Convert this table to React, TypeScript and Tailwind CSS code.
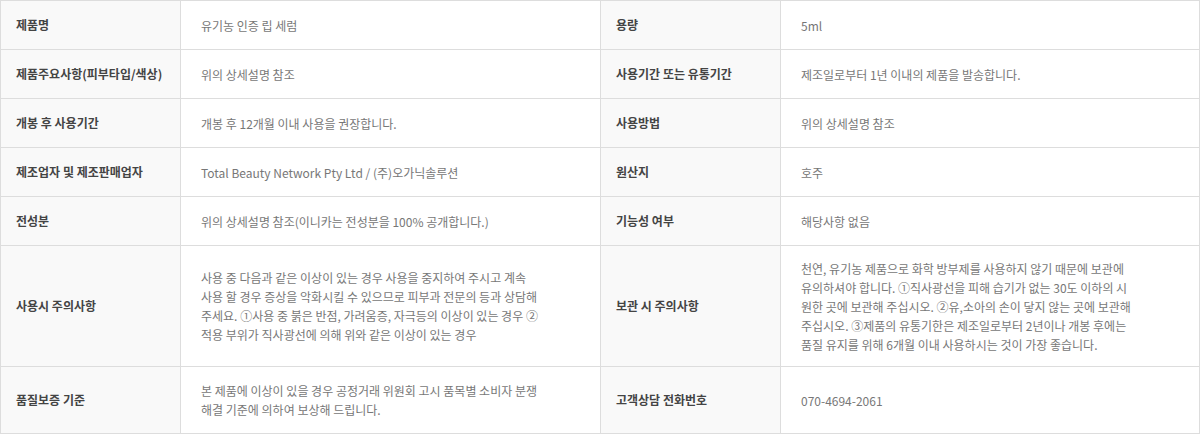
const rows: { h: string; cells: [string, React.ReactNode, string, React.ReactNode] }[] = [
  { h: 'h-[49px]', cells: ['제품명', '유기농 인증 립 세럼', '용량', '5ml'] },
  {
    h: 'h-[49px]',
    cells: ['제품주요사항(피부타입/색상)', '위의 상세설명 참조', '사용기간 또는 유통기간', '제조일로부터 1년 이내의 제품을 발송합니다.'],
  },
  { h: 'h-[49px]', cells: ['개봉 후 사용기간', '개봉 후 12개월 이내 사용을 권장합니다.', '사용방법', '위의 상세설명 참조'] },
  {
    h: 'h-[49px]',
    cells: ['제조업자 및 제조판매업자', 'Total Beauty Network Pty Ltd / (주)오가닉솔루션', '원산지', '호주'],
  },
  {
    h: 'h-[49px]',
    cells: ['전성분', '위의 상세설명 참조(이니카는 전성분을 100% 공개합니다.)', '기능성 여부', '해당사항 없음'],
  },
  {
    h: 'h-[121px]',
    cells: [
      '사용시 주의사항',
      <>
        사용 중 다음과 같은 이상이 있는 경우 사용을 중지하여 주시고 계속
        <br />
        사용 할 경우 증상을 악화시킬 수 있으므로 피부과 전문의 등과 상담해
        <br />
        주세요. ①사용 중 붉은 반점, 가려움증, 자극등의 이상이 있는 경우 ②
        <br />
        적용 부위가 직사광선에 의해 위와 같은 이상이 있는 경우
      </>,
      '보관 시 주의사항',
      <>
        천연, 유기농 제품으로 화학 방부제를 사용하지 않기 때문에 보관에
        <br />
        유의하셔야 합니다. ①직사광선을 피해 습기가 없는 30도 이하의 시
        <br />
        원한 곳에 보관해 주십시오. ②유,소아의 손이 닿지 않는 곳에 보관해
        <br />
        주십시오. ③제품의 유통기한은 제조일로부터 2년이나 개봉 후에는
        <br />
        품질 유지를 위해 6개월 이내 사용하시는 것이 가장 좋습니다.
      </>,
    ],
  },
  {
    h: 'h-[67px]',
    cells: [
      '품질보증 기준',
      <>
        본 제품에 이상이 있을 경우 공정거래 위원회 고시 품목별 소비자 분쟁
        <br />
        해결 기준에 의하여 보상해 드립니다.
      </>,
      '고객상담 전화번호',
      '070-4694-2061',
    ],
  },
];

export default function App() {
  return (
    <div className="w-[1200px] h-[438px] bg-white font-['Noto_Sans_CJK_KR','Noto_Sans',sans-serif] text-[12px]">
      <div className="grid grid-cols-[180px_420px_180px_419px] border-t border-l border-[#dddddd]">
        {rows.map((row, i) => (
          <div key={i} className="contents">
            <div className={`${row.h} flex items-center pl-[15px] pr-2 bg-[#f9f9f9] border-r border-b border-[#dddddd] font-bold text-[#444444]`}>
              {row.cells[0]}
            </div>
            <div className={`${row.h} flex items-center px-[20px] border-r border-b border-[#dddddd] text-[#777777] leading-[19px]`}>
              <div>{row.cells[1]}</div>
            </div>
            <div className={`${row.h} flex items-center pl-[15px] pr-2 bg-[#f9f9f9] border-r border-b border-[#dddddd] font-bold text-[#444444]`}>
              {row.cells[2]}
            </div>
            <div className={`${row.h} flex items-center px-[20px] border-r border-b border-[#dddddd] text-[#777777] leading-[19px]`}>
              <div>{row.cells[3]}</div>
            </div>
          </div>
        ))}
      </div>
    </div>
  );
}
